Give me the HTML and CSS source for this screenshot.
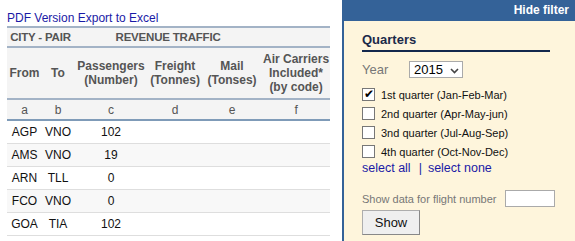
FILE: index.html
```html
<!DOCTYPE html>
<html>

<head>
  <title>City pair traffic</title>
  <link rel="stylesheet" href="styles.css">
</head>

<body>
  <div class="page">
    <div class="report">
      <div class="links"><a href="#">PDF Version</a> <a href="#">Export to Excel</a></div>
      <table class="traffic">
        <colgroup>
          <col class="c1"><col class="c2"><col class="c3"><col class="c4"><col class="c5"><col class="c6">
        </colgroup>
        <thead>
          <tr class="group">
            <th colspan="2">CITY - PAIR</th>
            <th colspan="3">REVENUE TRAFFIC</th>
            <th></th>
          </tr>
          <tr class="names">
            <th>From</th>
            <th>To</th>
            <th>Passengers<br>(Number)</th>
            <th>Freight<br>(Tonnes)</th>
            <th>Mail<br>(Tonses)</th>
            <th>Air Carriers<br>Included*<br>(by code)</th>
          </tr>
          <tr class="letters">
            <th>a</th><th>b</th><th>c</th><th>d</th><th>e</th><th>f</th>
          </tr>
        </thead>
        <tbody>
          <tr><td>AGP</td><td>VNO</td><td>102</td><td></td><td></td><td></td></tr>
          <tr><td>AMS</td><td>VNO</td><td>19</td><td></td><td></td><td></td></tr>
          <tr><td>ARN</td><td>TLL</td><td>0</td><td></td><td></td><td></td></tr>
          <tr><td>FCO</td><td>VNO</td><td>0</td><td></td><td></td><td></td></tr>
          <tr><td>GOA</td><td>TIA</td><td>102</td><td></td><td></td><td></td></tr>
        </tbody>
      </table>
    </div>

    <div class="filter">
      <div class="filter-head"><a href="#">Hide filter</a></div>
      <div class="filter-body">
        <h3>Quarters</h3>
        <div class="year">
          <label>Year</label>
          <div class="select">2015
            <svg class="chev" width="9" height="6" viewBox="0 0 9 6"><polyline points="1,1 4.5,4.5 8,1" fill="none" stroke="#444" stroke-width="1.6"/></svg>
          </div>
        </div>
        <div class="quarters">
          <label><span class="box checked">&#10004;</span>1st quarter (Jan-Feb-Mar)</label>
          <label><span class="box"></span>2nd quarter (Apr-May-jun)</label>
          <label><span class="box"></span>3nd quarter (Jul-Aug-Sep)</label>
          <label><span class="box"></span>4th quarter (Oct-Nov-Dec)</label>
        </div>
        <div class="select-links"><a href="#">select all</a><span class="sep">|</span><a href="#">select none</a></div>
        <div class="flight">
          <label>Show data for flight number</label>
          <span class="input"></span>
        </div>
        <button type="button" class="show-btn">Show</button>
      </div>
    </div>
  </div>
</body>

</html>
```

FILE: styles.css
```css
body {
margin: 0;
font-family: "Liberation Sans", Arial, sans-serif;
background-color: #fff;
}

a {
color: #1a1aa6;
text-decoration: none;
}

.page {
display: flex;
height: 241px;
overflow: hidden;
}

.report {
width: 323px;
padding: 10px 0 0 7px;
flex: none;
}

.links {
font-size: 12px;
line-height: 16px;
}

.traffic {
border-collapse: collapse;
width: 323px;
table-layout: fixed;
font-size: 12px;
}

.c1 { width: 35px; }
.c2 { width: 32px; }
.c3 { width: 74px; }
.c4 { width: 54px; }
.c5 { width: 60px; }
.c6 { width: 68px; }

.traffic thead th {
background-color: #f4f4f4;
color: #555;
font-weight: bold;
text-align: center;
white-space: nowrap;
padding: 0;
}

.traffic .group th {
border-top: 2px solid #a3b3c6;
border-bottom: 2px solid #a3b3c6;
height: 18px;
font-size: 11.5px;
letter-spacing: -0.2px;
}

.traffic .names th {
height: 50px;
line-height: 14px;
border-bottom: 2px solid #a3b3c6;
vertical-align: middle;
}

.traffic .letters th {
height: 19px;
border-bottom: 2px solid #7f9bb8;
font-weight: normal;
}

.traffic td {
height: 22px;
text-align: center;
font-size: 12px;
color: #111;
border-bottom: 1px solid #dedede;
padding: 0;
}

.traffic tbody tr:nth-child(even) td {
background-color: #f8f8f8;
}

.filter {
margin-left: 12px;
flex: 1;
display: flex;
flex-direction: column;
}

.filter-head {
background-color: #346298;
height: 21px;
text-align: right;
padding-right: 6px;
}

.filter-head a {
color: #fff;
font-weight: bold;
font-size: 12px;
line-height: 19px;
}

.filter-body {
flex: 1;
background-color: #fef5dc;
border-left: 2px solid #346298;
padding: 11px 0 0 18px;
}

.filter-body h3 {
margin: 0;
width: 188px;
font-size: 13px;
line-height: 15px;
color: #1b2a4a;
padding-bottom: 3px;
border-bottom: 2px solid #13284d;
}

.year {
display: flex;
align-items: center;
margin-top: 9px;
font-size: 13px;
color: #777;
}

.year label {
width: 47px;
}

.select {
display: flex;
align-items: center;
justify-content: space-between;
width: 45px;
height: 15px;
border: 1px solid #aaa;
background-color: #fff;
color: #000;
font-size: 13px;
line-height: 15px;
padding: 0 3px 0 4px;
}

.chev {
margin-top: 3px;
}

.quarters {
margin-top: 10px;
display: flex;
flex-direction: column;
gap: 6px;
}

.quarters label {
display: flex;
align-items: center;
font-size: 11px;
color: #111;
height: 13px;
}

.box {
flex: none;
width: 11px;
height: 11px;
border: 1px solid #777;
background-color: #fff;
margin-right: 6px;
font-size: 12px;
line-height: 11px;
text-align: center;
color: #000;
overflow: hidden;
}

.select-links {
margin-top: 3px;
font-size: 12.5px;
line-height: 15px;
}

.sep {
color: #1a1aa6;
padding: 0 6px 0 8px;
}

.flight {
display: flex;
align-items: center;
margin-top: 14px;
font-size: 11px;
color: #777;
}

.input {
width: 48px;
height: 15px;
border: 1px solid #aaa;
background-color: #fff;
margin-left: 8px;
}

.show-btn {
display: block;
margin-top: 3px;
width: 58px;
height: 25px;
font-family: "Liberation Sans", Arial, sans-serif;
font-size: 13px;
color: #111;
background-color: #efefef;
border: 1px solid #adadad;
border-right-color: #888;
border-bottom-color: #888;
}
```
